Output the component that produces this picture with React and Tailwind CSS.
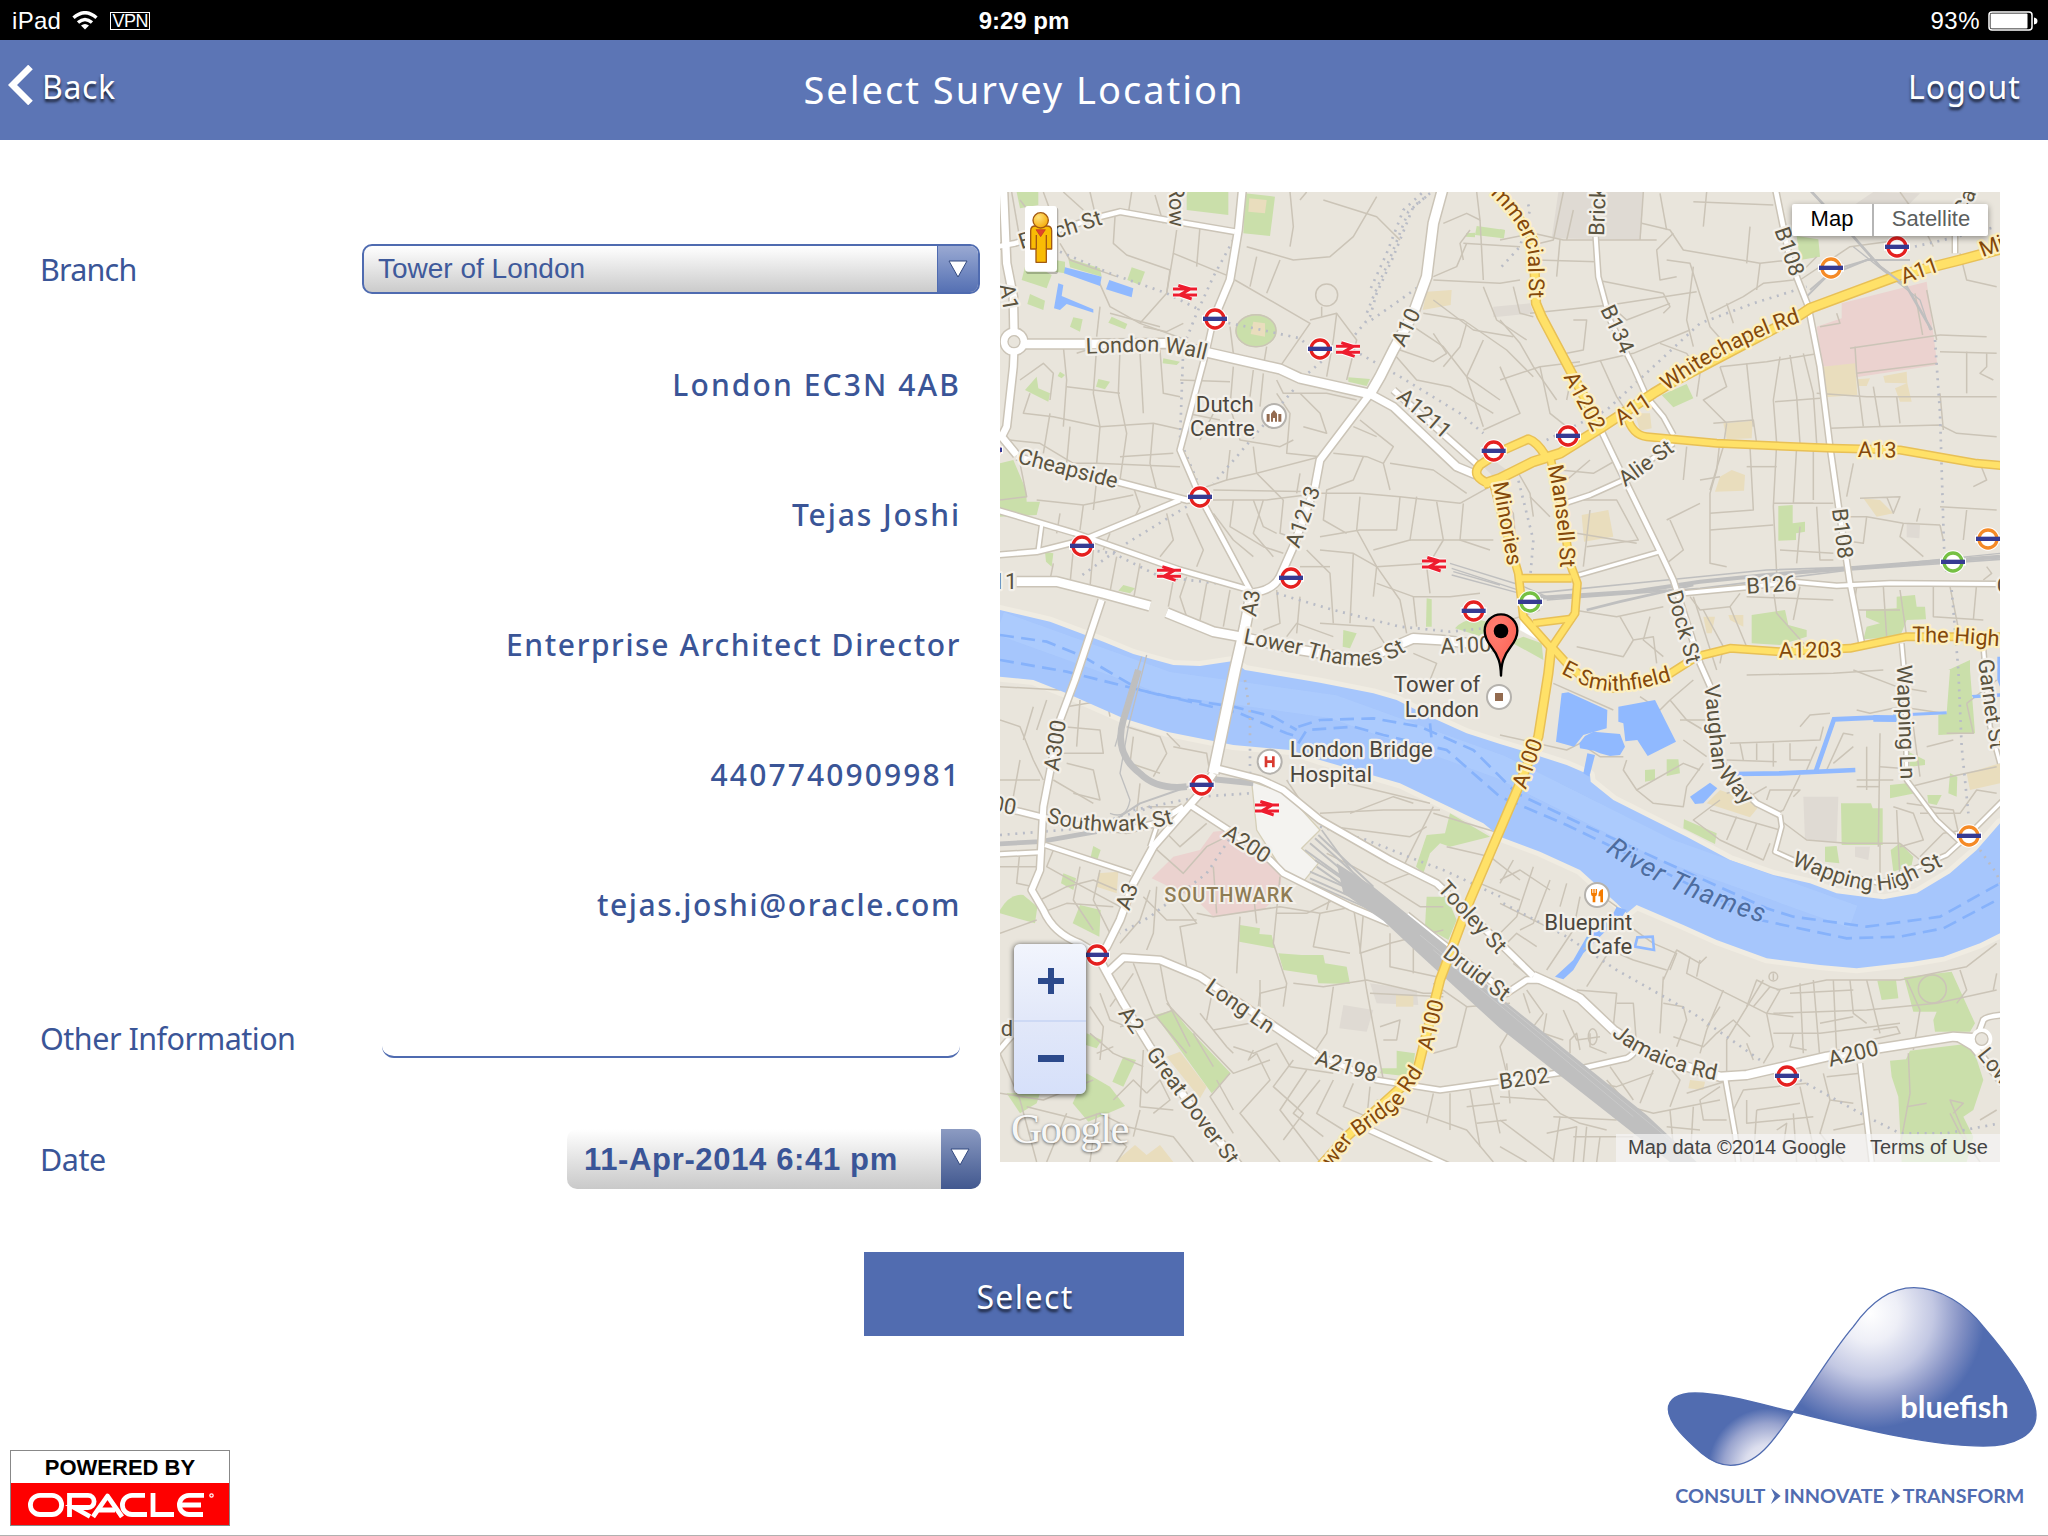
import React from "react";

/* Map drawing units: three per CSS pixel. */

const MINOR = [
  // north-west
  "M35 36L60 180", "M60 60L130 150L240 120", "M130 36L150 90L125 135", "M190 36L250 90", "M270 36L285 100", "M345 110L340 190L380 225L510 270L500 340L420 430",
  "M395 36L385 100", "M465 45L490 130", "M530 150L520 220L690 290", "M520 220L500 340", "M600 140L590 260", "M180 190L210 240L350 290", "M290 290L330 380L420 430L560 480",
  "M300 380L290 470", "M330 400L480 440", "M430 440L500 455L550 430", "M60 600L130 550L160 580L150 660", "M90 640L70 700L160 710L300 740", "M150 700L130 820",
  "M190 500L200 600L190 740", "M230 520L290 500L280 640L300 740L290 850", "M200 620L360 640", "M360 510L355 640L380 760L360 900", "M420 520L430 700", "M480 510L490 640L540 650",
  "M300 740L460 730L550 750", "M460 730L450 850L470 930", "M210 740L200 850", "M540 600L690 605", "M560 700L660 720", "M30 780L120 790L220 850L290 850L540 860",
  "M360 830L520 820", "M60 850L80 950L0 960", "M110 960L250 975L400 945", "M250 975L240 1050", "M290 900L280 990", "M400 920L420 980L400 1020", "M180 1000L170 1060", "M330 1060L310 1110",
  "M160 1150L150 1200", "M220 1110L210 1210", "M280 1110L270 1220", "M350 1130L330 1235", "M420 1150L400 1260", "M480 1180L520 1200L505 1280", "M560 1190L540 1250L560 1310", "M620 1210L600 1320", "M690 1230L670 1340",
  "M500 1000L520 1080L480 1130", "M560 1000L610 1110L590 1160", "M640 1000L700 1080L760 1130", "M700 960L690 1040L790 1100L850 1120", "M760 960L790 1040L830 1060",
  // north-centre
  "M740 200L880 240L990 230L1060 170L1130 50", "M870 36L880 140L870 200", "M970 60L1130 110L1200 180", "M920 36L900 60", "M705 300L930 430L840 560", "M840 240L800 340", "M770 230L750 320", "M930 420L1010 400L1000 480L980 590",
  "M965 380L965 410", "M1010 400L1070 480L1040 600", "M690 440L700 520", "M800 500L790 560", "M830 600L850 640L980 640L1070 660", "M790 580L780 680", "M700 560L690 680L720 780L840 800L880 780", "M760 570L750 650",
  "M640 700L600 780", "M830 640L870 700L860 820L960 830", "M900 640L960 700L980 760L910 740", "M690 810L680 900L620 920L610 960", "M760 800L770 880L850 960", "M680 900L770 880L960 830", "M640 930L960 935", "M620 960L800 960L960 940L1080 940L1200 950L1380 970",
  "M850 960L840 1060L900 1080", "M790 960L760 1060L820 1130", "M900 880L890 940", "M1000 820L1100 830L1150 850L1170 930", "M1090 830L1060 900L980 930L970 1020L1040 1060", "M1170 850L1300 870L1400 940", "M1060 740L1130 770",
  "M1150 850L1180 800L1130 760L1080 720", "M1200 950L1190 1050L1080 1050L960 1070", "M1080 950L1070 1050L1130 1160L1120 1250", "M1250 950L1230 1080L1120 1110", "M1310 965L1330 1080L1300 1130", "M1390 970L1380 1080L1470 1110", "M1470 920L1380 970",
  "M1230 1080L1480 1080", "M960 1110L1060 1120L1130 1160L1290 1150", "M920 1110L990 1180L1000 1330", "M900 1160L990 1160", "M1130 1210L1240 1250L1350 1250L1440 1240", "M1060 1120L1050 1330", "M1130 1160L1200 1260L1220 1360", "M1280 1160L1290 1240", "M1240 1250L1250 1340",
  "M830 1230L840 1330L790 1350", "M900 1250L890 1360", "M960 1330L1120 1340L1160 1400", "M860 1370L890 1330L1000 1370", "M1240 1420L1310 1450L1290 1500",
  "M1300 300L1500 310L1560 300", "M1330 130L1400 100L1440 120L1430 36", "M1440 120L1450 300", "M1400 190L1370 260L1300 290", "M1390 190L1560 200", "M1410 150L1380 190L1390 240", "M1270 400L1390 420L1520 510L1600 590", "M1300 360L1420 450L1540 470",
  "M1240 440L1330 500L1400 590L1450 740", "M1300 460L1340 520L1300 545L1200 510", "M1400 430L1380 500L1330 560", "M1450 480L1400 590L1500 660", "M1180 520L1250 600L1350 620L1480 700", "M1500 560L1560 700L1450 750", "M1450 320L1490 420L1580 480", "M1540 320L1560 400L1600 410",
  // north-east
  "M1500 180L1600 160L1690 180L1970 180", "M1690 36L1660 180L1620 190", "M1930 36L1920 180", "M1925 130L2010 150L2050 210L2280 250L2370 240", "M1610 240L1790 245", "M1680 180L1670 290", "M1720 90L1700 180", "M2080 65L2320 75", "M2120 36L2110 140", "M1980 40L2000 150",
  "M1590 400L1830 375L2090 335", "M1830 375L1880 420L2010 370", "M2080 260L2060 420L2080 500", "M2020 160L1970 210L1980 300L2030 290", "M2000 240L2070 250L2130 440L2200 520", "M1790 300L1990 340L2010 380L1990 400", "M2070 450L1900 520L1720 560L1700 660", "M1720 420L1760 420L1750 510L1700 520",
  "M1500 420L1560 490L1600 560L1670 660", "M1500 600L1620 560L1740 545", "M1620 560L1650 700L1700 740", "M1800 540L1850 650L1870 680", "M1980 490L2060 520L2100 580L2090 650", "M2130 400L2230 350L2290 310L2380 300L2450 230", "M2180 370L2200 430", "M2280 250L2270 330", "M2250 140L2240 250",
  "M2160 560L2300 545L2460 520", "M2160 560L2180 620L2110 660L2180 730", "M2240 550L2260 740", "M2340 530L2320 660L2330 790L2320 980L2330 1180", "M2370 525L2390 650L2400 790", "M2410 520L2440 640L2450 790", "M2325 665L2460 655", "M2140 730L2260 720L2270 790", "M2180 730L2170 800L2130 930",
  "M2450 640L2600 650L2990 650", "M2570 580L2590 740", "M2620 620L2640 740", "M2690 650L2700 730", "M2490 745L2620 740L2820 735L2870 760L2990 770", "M2550 505L2820 465", "M2565 500L2570 580L2810 550", "M2460 440L2520 430L2510 400", "M2745 340L2768 465", "M2780 330L2810 480",
  "M2820 465L2960 470", "M2820 515L2990 520", "M2900 515L2900 640", "M2960 520L2960 560L2940 580L2980 600", "M2820 640L2830 750", "M2700 36L2760 120", "M2880 220L2900 300L2990 320", "M2760 120L2800 200", "M2400 300L2550 200L2700 180",
  "M2060 800L2050 900", "M2160 780L2150 870L2130 940L2130 1150L2180 1160", "M2100 900L2160 890", "M2250 800L2260 990L2130 1000", "M2240 860L2330 860", "M2320 970L2500 970", "M2130 1050L2320 1035", "M2390 800L2380 970L2440 970", "M2440 800L2440 960", "M2000 1020L2100 970", "M2010 1020L2050 1110L2000 1150",
  "M1700 960L1850 960L1915 1080L1760 1100", "M1770 990L1750 1160", "M1680 870L1780 880L1850 840", "M1700 900L1770 840", "M1550 870L1590 940L1600 1010", "M1590 950L1650 1010", "M1500 940L1540 1000L1550 1120", "M1730 1060L1910 1090", "M2340 1110L2500 1120", "M2400 1040L2390 1150", "M2450 980L2460 1140L2500 1140",
  "M2580 955L2700 950L2680 1000L2660 950", "M2550 1010L2600 1010L2710 1030L2820 1035", "M2600 1010L2590 1090L2520 1080", "M2710 1030L2700 1070L2770 1130", "M2760 985L2750 1025", "M2820 980L2990 990", "M2940 850L2960 900L2920 920", "M2560 850L2540 950", "M2820 1035L2830 1080", "M2900 990L2890 1080",
  "M2070 1250L2100 1290L2190 1280", "M2080 1250L2150 1470", "M2110 1290L2170 1400L2160 1450", "M2220 1240L2190 1280L2240 1400", "M2240 1250L2500 1260", "M2320 1230L2330 1300L2420 1400", "M2400 1220L2380 1320", "M2570 1220L2560 1290L2700 1290", "M2650 1220L2660 1370", "M2700 1230L2720 1370",
  "M2800 1220L2800 1310L2950 1320", "M2850 1220L2880 1370", "M2930 1210L2920 1320", "M2960 1160L2975 1180L2950 1200", "M1620 1290L1500 1330L1450 1340", "M1720 1290L1850 1310L1990 1280", "M1860 1310L1900 1380L1870 1430L1730 1400", "M1900 1380L1960 1370L1970 1450", "M1950 1310L1930 1380L1990 1430",
  // Wapping
  "M1500 1665L1700 1710L1740 1690L1800 1730L1870 1730", "M1660 1510L1840 1590", "M1920 1550L1980 1590L2010 1560L2080 1500", "M2010 1560L2060 1620L2110 1650", "M2040 1620L2130 1620", "M2050 1680L2120 1730", "M1880 1740L1870 1770L1910 1830L2050 1750L2100 1770",
  "M1910 1830L1960 1870L2050 1880L2060 1820L2110 1750", "M2240 1485L2500 1480L2650 1470", "M2400 1640L2430 1605L2490 1600", "M2190 1690L2460 1680L2470 1640", "M2180 1740L2330 1745", "M2220 1690L2230 1740", "M2270 1690L2270 1740", "M2320 1690L2320 1760", "M2370 1690L2370 1740L2430 1740", "M2450 1700L2420 1770",
  "M2480 1770L2530 1660L2560 1665", "M2500 1750L2560 1700", "M2570 1590L2610 1600L2700 1580L2830 1600", "M2640 1660L2635 2000", "M2570 1820L2640 1820", "M2640 1760L2700 1765", "M2180 1840L2220 1830L2230 1860L2300 1820", "M2300 1860L2310 1830L2400 1830L2380 1850", "M2400 1785L2350 1890L2330 1900",
  "M2160 1860L2080 1920L2160 1980L2290 2040L2310 1990", "M2130 1890L2340 1950", "M2210 1910L2180 1980", "M2270 1930L2240 2010", "M2340 1920L2420 1980L2540 1990L2700 1990", "M2680 1880L2740 1900L2770 1980L2700 2000", "M2690 1890L2700 2100", "M2640 1990L2640 2080", "M2570 1800L2680 1800", "M2600 1700L2600 1830",
  "M2720 1870L2860 1890L2880 1980", "M2760 1900L2880 1900L2930 1830L2990 1840", "M2730 1820L2850 1790L2990 1760", "M2740 1640L2760 1790", "M2900 1570L2990 1500", "M2900 1570L2920 1660L2840 1660", "M2760 2030L2830 1960L2890 1950", "M2700 1990L2760 2040",
  "M2560 1470L2690 1520L2780 1535", "M2780 1700L2860 1680",
  // south-west
  "M0 1620L60 1640L100 1740L130 1800", "M0 1520L180 1530", "M100 1580L70 1680", "M140 1560L110 1650", "M200 1580L320 1560L330 1610", "M190 1640L300 1650L310 1720L180 1720", "M240 1560L230 1700", "M380 1640L480 1670L500 1720L460 1790", "M400 1670L390 1750L480 1780", "M520 1700L620 1720L630 1780",
  "M200 1750L280 1770L300 1860L220 1840", "M160 1800L280 1870", "M0 1800L120 1800", "M60 1740L40 1850", "M540 1700L500 1660", "M440 1880L550 1880", "M420 1810L410 1900", "M460 2000L550 2080L620 2000L700 1960", "M500 1960L540 2000L620 1930", "M160 2010L140 2060L230 2110L360 2180", "M60 2010L50 2110L100 2120",
  "M0 2060L110 2060", "M120 2160L200 2120L280 2100L350 2130", "M120 2200L200 2170L340 2180", "M240 2060L220 2160L280 2250", "M300 2070L280 2160L330 2260", "M0 2260L110 2220", "M450 2130L420 2220L360 2290", "M430 2150L500 2220L590 2220", "M470 2120L460 2260L440 2310", "M530 2150L590 2230L540 2240L560 2360",
  "M590 2200L640 2210L840 2180L960 2200L1060 2180", "M720 2210L710 2380", "M640 2060L650 2200", "M760 2140L770 2230", "M840 2090L830 2190L820 2290L860 2410L850 2480", "M1000 2160L920 2200L830 2200", "M960 2200L940 2300L1050 2320", "M1060 2180L1100 2430L1150 2700", "M1090 2200L1080 2320L1170 2290L1330 2250",
  "M980 2190L990 2150", "M1170 2260L1170 2360L1310 2390", "M1240 2240L1240 2380", "M880 2410L970 2420L1100 2400L1270 2440L1330 2440", "M780 2400L780 2520", "M860 2420L780 2440L770 2520", "M1000 2420L980 2560L940 2620", "M1110 2440L1330 2450", "M1140 2540L1200 2520L1190 2580L1150 2580",
  "M570 2380L640 2420L620 2520", "M480 2350L500 2460L570 2600", "M400 2350L460 2500L560 2620", "M330 2480L400 2380", "M300 2440L330 2520L380 2540", "M360 2540L440 2520L520 2490", "M270 2480L310 2540L300 2640", "M270 2560L340 2620L430 2660", "M290 2620L340 2600", "M430 2610L420 2780L520 2790", "M500 2470L700 2680L810 2640",
  "M600 2500L680 2600L700 2620", "M640 2550L750 2530", "M690 2680L630 2750L700 2860", "M580 2560L640 2660", "M700 2600L760 2620L830 2590L870 2660L1000 2680", "M760 2610L745 2640L770 2620", "M770 2620L810 2700L720 2800L840 2946", "M880 2640L820 2720L910 2800L850 2880", "M920 2670L840 2790L960 2946", "M960 2700L880 2800L970 2870",
  "M1000 2700L950 2800L1030 2850", "M1060 2710L1030 2780L1100 2810", "M1110 2720L1100 2820", "M700 2790L650 2700", "M1130 2760L1260 2800L1400 2850L1480 2946", "M1200 2730L1180 2790", "M1300 2740L1280 2830", "M1410 2730L1440 2900", "M1470 2720L1500 2860", "M1350 2740L1350 2850", "M1400 2780L1500 2770", "M1430 2830L1520 2820",
  "M0 2620L60 2760L110 2946", "M0 2740L130 2760L280 2700", "M80 2780L240 2820L300 2800L380 2840", "M200 2800L140 2946", "M290 2800L270 2946", "M340 2760L400 2700L440 2740", "M440 2740L480 2700L510 2760L460 2800", "M380 2840L520 2870L580 2946", "M330 2850L380 2900L350 2946", "M420 2790L400 2870",
  "M960 1900L1150 1890L1320 1890", "M1050 1900L1180 1850L1240 1870", "M1000 1940L1230 1970L1280 1940", "M860 1800L900 1860L860 1840", "M900 1770L1000 1800L1290 1870", "M1300 1900L1500 1960", "M980 2020L1060 2060L1150 2110L1260 2180L1330 2180", "M1150 2110L1230 2080", "M1300 1880L1210 2060",
  "M1340 2000L1470 2030L1560 2100", "M1440 2110L1560 2160", "M1300 2410L1400 2480L1530 2470", "M1400 2480L1370 2600L1300 2620",
  // south-east
  "M1500 2100L1560 2070L1650 2130", "M1500 2170L1640 2240", "M1540 2040L1500 2110", "M1600 2060L1550 2210L1500 2260", "M1650 2100L1600 2230L1560 2250", "M1700 2110L1680 2180", "M1740 2150L1720 2250L1640 2370", "M1500 2310L1550 2260L1610 2300", "M1590 2390L1540 2350", "M1780 2130L1850 2180L1870 2230", "M1890 2240L1960 2290L2030 2320L2010 2370",
  "M1760 2420L1830 2310L1900 2340L2000 2370", "M1990 2400L2030 2310L2100 2350L2120 2330", "M2070 2330L2060 2380L2200 2450L2300 2500L2380 2510", "M2100 2340L2090 2390", "M1730 2430L1850 2440L1840 2540", "M1990 2390L1980 2560", "M1850 2470L1900 2470L1910 2600", "M1990 2470L2050 2480L2060 2520L2030 2600",
  "M2170 2430L2120 2550L2100 2620", "M2160 2480L2120 2540", "M2290 2400L2180 2580L2180 2690", "M2240 2480L2270 2400L2310 2420L2260 2480", "M2310 2420L2340 2430L2300 2500L2320 2600L2290 2650", "M2320 2400L2320 2380", "M2330 2430L2480 2400L2700 2400L2900 2360L2990 2290", "M2400 2410L2410 2620", "M2440 2400L2460 2640",
  "M2500 2400L2510 2620", "M2550 2400L2560 2500L2600 2530", "M2600 2400L2640 2560", "M2320 2500L2600 2490L2810 2470L2990 2430", "M2370 2440L2560 2430", "M2460 2530L2560 2510", "M2320 2560L2460 2560L2700 2530", "M2380 2560L2370 2600L2420 2610", "M2620 2550L2690 2540L2700 2560L2610 2580", "M2720 2400L2760 2490L2740 2610",
  "M2250 2570L2200 2520L2150 2560L2110 2600L2020 2570", "M2240 2590L2260 2640", "M2880 2370L2900 2430L2870 2470", "M2990 2380L2980 2430", "M1580 2430L1630 2500L1600 2540", "M1570 2440L1590 2500", "M1640 2500L1630 2560L1690 2580", "M1690 2490L1730 2580L1800 2570", "M1710 2620L1710 2580L1730 2560L1740 2610", "M1770 2560L1770 2600L1820 2620",
  "M1500 2500L1540 2530L1500 2600L1520 2680", "M1600 2720L1680 2800L1740 2830L1820 2850", "M1740 2700L1850 2720L1960 2680", "M1820 2700L1890 2780L1960 2800L2160 2760", "M1960 2670L1920 2770", "M1990 2640L2040 2700L2010 2780", "M1830 2660L1900 2760", "M2160 2720L2100 2760L2110 2820L2180 2820", "M2190 2700L2060 2740",
  "M2200 2790L2230 2730L2420 2710", "M2240 2760L2240 2830L2440 2810", "M2270 2790L2400 2770", "M2270 2790L2260 2946", "M2330 2850L2360 2830L2350 2900", "M2400 2720L2450 2946", "M2470 2680L2490 2760L2560 2770", "M2490 2760L2460 2860L2530 2946", "M2580 2680L2480 2690", "M2500 2850L2600 2830", "M2380 2800L2390 2946",
  "M1500 2750L1640 2760", "M1520 2650L1530 2770", "M1660 2810L1850 2820", "M1640 2860L1730 2840L1720 2946", "M1680 2810L1660 2946", "M1760 2840L1750 2946", "M1720 2870L1900 2870", "M1800 2870L1790 2946", "M1500 2820L1660 2940", "M1500 2900L1580 2946", "M2010 2790L2020 2900", "M2080 2780L2070 2946", "M2000 2840L2100 2850",
  "M2725 2620L2730 2740L2700 2900", "M2860 2800L2890 2770L2850 2760L2900 2880", "M2850 2800L2880 2860L2940 2946", "M2940 2820L2990 2790", "M2720 2780L2780 2770",
];

const PARKS = [
  "M50 36L115 36L115 75L60 85Z", "M560 36L685 36L685 105L560 90Z", "M735 40L825 50L810 168L730 160Z", "M80 240L155 285L140 325L65 300Z", "M165 240L195 245L195 280L165 275Z", "M205 235L300 265L305 290L210 262Z", "M395 262L435 275L420 315L382 300Z", "M90 342L135 362L130 390L82 372Z",
  "M220 412L248 418L240 455L210 440Z", "M335 410L382 432L375 448L325 428Z", "M490 535L540 545L530 555L488 550Z", "M110 590L115 625L150 640L145 665L75 630Z", "M180 575L195 585L185 595L173 588Z", "M295 597L330 605L315 628L288 620Z", "M0 850L40 840L78 930L80 965L120 965L110 1005L0 1010Z", "M1045 592L1110 597L1100 618L1045 605Z",
  "M135 1115L160 1120L155 1160L138 1145Z", "M370 1215L405 1225L390 1240L355 1232Z", "M1280 1255L1295 1258L1295 1340L1278 1340Z", "M1030 1350L1070 1360L1050 1405L1028 1400Z", "M1365 1345Q1400 1305 1460 1325L1500 1350L1460 1375Z", "M1530 1385L1570 1370L1625 1390L1630 1440Z",
  "M1430 138L1515 150L1510 175L1425 165Z", "M1398 160L1425 158L1425 172L1398 170Z", "M1500 148L1515 150L1512 175L1500 175Z",
  "M1985 645L2060 612L2080 655L2020 682Z", "M2390 168L2455 178L2460 230L2400 240Z", "M2335 978L2378 975L2378 1030L2415 1025L2415 1055L2388 1060L2388 1080L2335 1082Z", "M2255 1305L2355 1290L2365 1335L2420 1350L2420 1370L2340 1395L2255 1390Z", "M2690 1250L2745 1245L2750 1280L2775 1280L2778 1318L2720 1320L2700 1370L2590 1378L2600 1340L2640 1330L2598 1312L2598 1290L2690 1285Z",
  "M2850 1470L2910 1470L2925 1660L2815 1665L2815 1605L2840 1600Z", "M2670 1815L2720 1810L2745 1840L2670 1855Z", "M2725 1715L2775 1740L2775 1755L2730 1760Z", "M2850 1780L2872 1790L2870 1850L2845 1840Z", "M2782 1845L2825 1845L2810 1875L2785 1870Z", "M2523 1870L2613 1870L2618 1885L2648 1885L2648 1995L2525 1995Z", "M2700 1990L2740 2030L2735 2055L2680 2075L2672 2010Z",
  "M2475 2000L2510 1998L2518 2050L2475 2045Z", "M2052 1918L2150 1960L2145 1992L2050 1945Z", "M1935 1770L1965 1768L1965 1800L1935 1805Z", "M2000 1738L2035 1738L2040 1780L2000 1788Z",
  "M2632 2402L2688 2400L2695 2455L2645 2460Z", "M2712 2392L2855 2375L2925 2530L2910 2555L2805 2555L2800 2520L2810 2495L2740 2495Z", "M2670 2642L2718 2638L2730 2612L2915 2590L2950 2700L2920 2790L2890 2810L2920 2870L2900 2946L2705 2946L2695 2750L2675 2690Z",
  "M280 1998L302 2010L290 2045L272 2030Z", "M190 2080L228 2095L220 2130L183 2110Z", "M0 2190Q30 2140 70 2145L112 2180L105 2230L0 2200Z", "M240 2175L302 2190L298 2270L218 2230Z", "M465 2505L520 2490L560 2540L692 2680L635 2740Z", "M370 2630L408 2640L370 2720L337 2705Z", "M260 2560L305 2580L290 2605L258 2595Z", "M218 2770L260 2680L330 2720L375 2778L265 2825Z", "M20 2740L120 2740L110 2770L60 2800Z",
  "M720 2235L780 2245L778 2262L815 2265L825 2305L718 2285Z", "M835 2320L905 2325L970 2325L975 2350L1040 2360L1050 2412L955 2410L950 2385L850 2370Z", "M1190 2612L1245 2620L1235 2690L1140 2680L1145 2665L1190 2665Z", "M1350 1900L1470 1970L1350 2000L1320 1990L1290 2020L1270 2080L1248 2060L1280 1965L1335 1960Z", "M1280 2150L1340 2150L1370 2220L1345 2280L1275 2240Z",
  "M2845 1470L2910 1440L2910 1470Z",
];

const SANDS = [
  "M748 55L800 60L795 100L745 95Z", "M760 425L795 430L795 470L752 462Z", "M1280 335L1355 330L1352 375L1268 390Z", "M1905 700L1950 700L1955 745L1920 752Z", "M1745 1005L1825 990L1840 1070L1752 1085Z", "M2170 730L2258 722L2255 775L2180 778Z", "M2160 890L2195 870L2235 885L2232 932L2145 935Z", "M2468 560L2565 550L2572 645L2475 652Z", "M2570 598L2610 595L2600 618L2575 618Z",
  "M2650 588L2720 575L2722 610L2735 665L2700 665L2685 625L2720 610L2655 608Z", "M2590 955L2640 960L2680 1000L2630 1010Z", "M2110 1310L2145 1310L2135 1360L2120 1360Z", "M2185 1305L2230 1305L2230 1340L2190 1320Z", "M2160 1830L2280 1875L2250 1912L2120 1870Z", "M2900 1780L3000 1750L3000 1810L2910 1830Z", "M295 2080L355 2075L350 2140L290 2120Z",
  "M500 2630L540 2615L620 2720L600 2755Z", "M345 2946L405 2895L440 2925L480 2895L520 2946Z", "M2070 2700L2115 2705L2110 2730L2065 2725Z", "M1188 2445L1240 2445L1240 2480L1188 2480Z",
];

const GREYS = [
  "M1675 36L1930 36L1922 180L1655 175Z", "M2620 36L2760 40L2700 100L2540 90Z", "M1110 2410L1250 2430L1255 2475L1130 2470Z", "M1030 2475L1120 2490L1100 2555L1018 2545Z", "M2410 1850L2515 1850L2510 1985L2415 1980Z", "M1480 380L1590 370L1600 400L1480 412Z", "M2345 1020L2375 1018L2375 1078L2345 1078Z", "M2720 1030L2760 1035L2758 1075L2720 1072Z", "M1450 860L1480 840L1520 870L1490 900Z", "M2565 2000L2610 2000L2605 2040L2565 2030Z",
];

const PINK = ["M2525 370L2780 305L2812 555L2568 592L2565 555L2468 560L2450 440L2525 415Z", "M640 1955L690 1950L790 2035L845 2080L840 2140L790 2190L640 2210L590 2160L455 2095L520 2030L600 2010Z"];

const WATER = [
  "M195 262L305 290L300 318L192 280Z", "M328 300L400 325L395 352L318 328Z", "M175 310L190 315L185 348L280 388L280 398L200 372L180 390L162 385Z",
  "M1685 1540L1705 1537L1822 1590L1820 1645L1750 1665L1722 1700L1668 1685Z", "M1738 1690L1755 1668L1780 1655L1860 1662L1875 1700L1860 1725L1830 1728L1800 1720L1782 1712L1740 1705Z", "M1855 1580L1965 1560L2028 1685L1943 1728L1912 1680L1876 1684L1870 1630L1855 1625Z", "M1762 1720L1785 1725L1768 1790L1750 1780Z",
  "M2070 1850L2130 1808L2152 1825L2110 1870L2085 1872Z", "M2915 1545L3000 1540L3000 1550L2920 1555Z", "M1665 2390L1720 2340L1760 2270L1830 2220L1850 2180L1880 2190L1860 2220L1820 2250L1750 2320L1720 2370L1690 2398Z",
  "M2992 1430L3000 1430L3000 1520L2992 1500Z",
];

const RIVER =
  "M0 1290L150 1325L310 1385L400 1422L520 1455L600 1458L700 1443L735 1470L960 1508L1120 1540L1190 1560L1290 1610L1400 1660L1500 1692L1560 1710L1700 1755L1770 1785L1772 1805L1840 1860L1940 1910L2060 1970L2190 2040L2320 2085L2430 2110L2510 2140L2650 2158L2750 2140L2850 2080L2930 2010L3000 1930L3000 2260L2940 2290L2830 2330L2740 2345L2570 2365L2460 2355L2300 2335L2150 2280L2050 2235L1910 2175L1880 2200L1850 2170L1740 2070L1620 2015L1500 1970L1450 1930L1200 1810L960 1740L870 1710L700 1695L500 1655L370 1615L200 1540L100 1500L0 1490Z";

const ROADS = [
  [14, "M-10 200L45 190L300 110L360 95L500 120L705 155"],
  [22, "M10 20L20 250L40 350L42 460"],
  [20, "M42 510L40 560L20 740L5 770L50 825"],
  [16, "M50 830L350 905L560 960L600 955"],
  [20, "M728 20L715 150L690 300L640 420"],
  [14, "M640 420L620 510L540 810L600 950L750 1230"],
  [26, "M65 492L250 492L500 490L620 517L840 567L900 595L1110 642"],
  [22, "M1110 642L1180 680L1370 860L1430 885"],
  [16, "M1180 630L1440 860"],
  [28, "M1330 20L1300 130L1280 290L1240 400L1180 510L1140 590L1110 642"],
  [20, "M1110 642L960 840L945 920L880 1100L840 1190Q820 1230 760 1238"],
  [14, "M-10 990L220 1058L540 1170L750 1230"],
  [14, "M-10 1125L110 1115L250 1080L540 960"],
  [10, "M125 1035L115 1110"],
  [26, "M50 1205L170 1205L310 1240L450 1278"],
  [26, "M500 1298L640 1355L730 1372L900 1410L1090 1440L1240 1375L1320 1380L1500 1400"],
  [18, "M305 1260L225 1500L180 1620L130 1880L120 2070L95 2130L130 2190Q160 2260 240 2290L290 2320"],
  [30, "M755 1240L735 1340L705 1470L640 1780"],
  [20, "M640 1780L600 1840L460 2000L400 2110L360 2220L320 2300L295 2330"],
  [16, "M-10 1880L60 1895L200 1930L380 1950L470 1930L550 1880"],
  [10, "M470 1940L450 2000"],
  [12, "M-10 2023L120 2017"],
  [12, "M135 1995L395 2080"],
  [16, "M570 1875L700 1960L810 2040L850 2080L1050 2180L1170 2230"],
  [18, "M650 1765L780 1798L850 1830L960 1920L1170 2040L1310 2110L1500 2290L1600 2388"],
  [24, "M1600 2388L1660 2415L1740 2455L1840 2550L1960 2630L2160 2690L2240 2685L2480 2630L2860 2570L2930 2575"],
  [16, "M1220 2205L1340 2300L1520 2440L1580 2400L1620 2400"],
  [20, "M320 2380L370 2333L480 2340L600 2390L780 2510L950 2625"],
  [14, "M950 2625L1130 2700L1320 2730L1500 2705L1700 2675L1880 2635Q1900 2625 1905 2610"],
  [20, "M305 2350L370 2470L450 2600L560 2760L720 2960"],
  [16, "M1110 2850L1350 2960"],
  [14, "M-10 2620L50 2550"],
  [12, "M1787 170L1795 290L1830 420L1900 560L1940 650L1990 710L2020 765"],
  [14, "M1805 755L1860 870L1980 1115L2020 1200L2100 1450L2140 1540L2150 1720L2190 1790L2270 1870L2340 1905"],
  [10, "M2340 1905L2345 1940L2325 2015L2380 2040L2510 2080L2640 2110L2840 2025L2900 1970L3010 1860"],
  [12, "M1700 968L1770 945L1870 900L2020 790"],
  [10, "M1720 1190L1980 1115"],
  [14, "M2325 20L2370 240L2425 380L2460 560L2490 800L2520 1010L2550 1210L2585 1390"],
  [12, "M2050 1240L2240 1222L2380 1205L2510 1217L2670 1210L3010 1212"],
  [10, "M2705 1390L2715 1500L2720 1800L2750 1840L2810 1920L2880 1985"],
  [12, "M2865 120L2865 220"],
  [12, "M2175 2690L2205 2860L2215 2946"],
  [12, "M2580 2650L2615 2946"],
  [14, "M2930 2575L2950 2520Q2960 2508 3010 2505"],
  [20, "M2870 2570L2920 2600L3010 2710"],
  [10, "M2950 1400L2970 1640L3000 1750"],
];

const YELLOW = [
  [22, "M1480 20L1540 90L1600 180L1608 370L1625 410L1710 570L1805 750"],
  [24, "M1450 912L1500 895L1600 845L1680 820L1800 745L1960 640L2010 610L2400 405L2430 385L2700 285L2880 240L3010 205"],
  [20, "M1470 912Q1410 890 1440 855L1500 815L1585 777Q1610 785 1635 825"],
  [18, "M1880 705Q1895 765 1940 770L2150 790L2500 805L2700 810L2930 850L3010 857"],
  [18, "M1480 910L1520 1060L1555 1180L1570 1310L1650 1400"],
  [18, "M1650 830L1680 960L1710 1150L1732 1210L1725 1300L1650 1410"],
  [18, "M1560 1195L1715 1195"],
  [16, "M1600 1330L1720 1315"],
  [22, "M1655 1390L1645 1480L1615 1670L1560 1810L1410 2160L1320 2400L1250 2680L1040 2870L960 2960"],
  [18, "M1655 1400L1700 1450L1745 1490L1840 1525L1980 1500L2090 1430L2190 1405L2340 1415L2550 1405L2720 1370L3010 1370"],
];

const RAILS = [
  [4, "M1350 1150L1560 1215L1640 1250L2000 1230"], [4, "M1355 1165L1570 1235L1660 1255"], [4, "M1355 1185L1560 1240"], [4, "M1360 1175L1500 1215"],
  [12, "M1600 1255L1900 1235L2100 1205L2300 1185L2550 1165L2800 1145L3000 1130"], [5, "M1600 1240L2000 1200L2300 1170L2600 1160"], [5, "M1640 1260L2100 1225L2550 1170L3000 1138"], [8, "M1760 1290L1860 1265L2080 1215"], [4, "M2700 1150L3000 1120"],
  [20, "M415 1470L370 1620Q340 1720 420 1780Q470 1830 560 1820"], [4, "M425 1430L345 1700"], [4, "M440 1425L385 1640L360 1780L390 1860Q380 1920 330 1900"],
  [14, "M-10 1992L120 1985L290 1955"], [6, "M290 1955L420 1870L570 1818"], [18, "M640 1798L760 1810"],
  [6, "M930 1990L1180 2200"], [6, "M915 2010L1150 2180"], [6, "M955 1965L1120 2120"], [6, "M945 1975L1140 2150"], [6, "M945 2040L1120 2160"], [6, "M930 2095L1120 2180"], [6, "M950 2060L1180 2220"], [6, "M930 2075L1100 2150"], [5, "M965 1950L1060 2080"], [5, "M935 2110L1160 2210"],
  [6, "M2420 350L2480 290L2600 240L2730 240"], [6, "M2430 330L2500 270L2620 235"], [8, "M2430 30L2560 170L2640 260L2720 320L2795 450"], [4, "M2560 200L2760 360L2790 450"],
];

const YARD = "M1010 2050L1120 2120L1340 2298L1500 2452L1940 2805L2090 2946L2010 2946L1500 2545L1260 2325L1150 2222L1030 2140Z";

const DOTS = [
  "M180 215L330 280L500 340L600 390", "M700 180L640 290L590 400L550 500L540 780L590 900", "M640 420L740 440L900 475L970 540L900 600", "M1290 40L1240 80L1180 230L1130 340L1110 410L1060 470", "M1265 40L1210 90L1160 220L1110 330", "M1278 50L1225 95L1172 230L1122 345L1100 400", "M1060 510L1200 590L1380 700L1450 760", "M880 630L710 830L640 910", "M560 980L380 1090L240 1190",
  "M270 1110L340 1120L480 1190L650 1210", "M830 1240L1000 1290L1200 1340L1350 1355L1500 1340", "M1550 880L1580 1000L1600 1080L1590 1200", "M1640 780L1820 690L1960 560L2100 430L2260 370L2420 320", "M2700 210L2830 180L2990 140", "M2805 480L2820 700L2832 1100L2840 1180", "M2855 1230L2875 1470L2885 1700L2905 1900", "M2940 2010L2990 2080L3000 2110",
  "M735 1500L750 1600L750 1790", "M400 1890L600 1850L750 1840", "M0 1965L250 1945L460 1880", "M700 1960L620 2080L450 2210L360 2260", "M960 1940L1100 1980L1250 2040L1330 2070L1500 2150", "M1510 2170L1700 2270L1850 2370L2080 2500L2280 2640", "M2400 2700L2600 2810L2700 2860L2840 2860L3000 2830", "M1505 260L1560 200L1590 90L1580 60", "M1270 310L1200 360L1100 430",
];

const FERRY = [
  "M0 1365L140 1385L250 1430L420 1530L720 1600L860 1660L895 1670", "M0 1440L200 1475L340 1510L500 1550L700 1580L820 1610L890 1650", "M895 1690L920 1650L1060 1640L1150 1665L1340 1710L1500 1850L1700 1935L1960 2060L2280 2220L2540 2275L2700 2270L2830 2245L3000 2155", "M895 1640L960 1620L1120 1615L1260 1640L1420 1710L1550 1840L1740 1930L1980 2040L2300 2185L2380 2210L2600 2240L2820 2210L3000 2110", "M1290 1630L1295 1680",
];

const INK = "#5a5340";
const BROWN = "#84480a";
const HALO = "#f3f0ea";
const HALO_Y = "#fdf0c0";

const LABELS = [
  ["Row", "M507 14L509 165"], ["Beech St", "M64 208L335 125"], ["A1", "M-2 316L12 395"], ["London Wall", "M258 521L440 514Q540 516 650 549"], ["A10", "M1213 504L1270 385"], ["A1211", "M1187 655L1350 796"],
  ["Cheapside", "M50 848L380 934"], ["11", "M-22 1228L70 1228"], ["A1213", "M897 1107L970 905"], ["A3", "M768 1312L784 1215"], ["Lower Thames St", "M728 1390L905 1425Q1030 1465 1120 1455Q1190 1440 1270 1378"], ["A100", "M1322 1421L1495 1413"],
  ["Brick", "M1812 168L1818 -5"], ["B134", "M1800 388L1874 548"], ["B108", "M2323 150L2378 310"], ["Ca", "M2900 110L2940 10"], ["Alie St", "M1876 922L2045 798"], ["B108", "M2496 988L2517 1160"], ["B126", "M2240 1241L2405 1231"], ["Dock St", "M2000 1238L2068 1480"],
  ["C", "M2990 1238L3050 1238"], ["Wapping Ln", "M2690 1456L2703 1830"], ["Garnet St", "M2934 1440L2958 1620L2985 1790"], ["Vaughan Way", "M2113 1516L2138 1765L2260 1912"], ["Wapping High St", "M2374 2055L2500 2105Q2620 2148 2700 2120L2880 2034"],
  ["A300", "M176 1775L201 1605"], ["200", "M-64 1885L75 1910"], ["Southwark St", "M138 1926Q340 1985 560 1920"], ["A3", "M388 2194L422 2100"], ["A200", "M665 1969L815 2065"], ["Tooley St", "M1310 2128L1515 2350"], ["Druid St", "M1325 2328L1545 2492"],
  ["Long Ln", "M612 2430L825 2576"], ["A2", "M353 2500L410 2580"], ["Great Dover St", "M437 2622Q520 2740 705 2985"], ["A2198", "M942 2652L1160 2718"], ["d", "M2 2568L70 2568"], ["B202", "M1501 2728L1675 2703"], ["Jamaica Rd", "M1834 2565Q1960 2672 2180 2706"], ["A200", "M2490 2660L2665 2618"], ["Low", "M2930 2625L3020 2737"],
];

const YLABELS = [
  ["mmercial St", "M1470 42Q1570 138 1584 220L1588 380"], ["A1202", "M1690 590L1793 785"], ["A11", "M1862 738L1975 665"], ["Whitechapel Rd", "M2001 633Q2200 488 2430 417"], ["A11", "M2711 312L2835 268"], ["Mi", "M2948 232L3025 203"], ["A13", "M2573 831L2705 833"], ["Mansell St", "M1643 860Q1675 990 1682 1190"], ["Minories", "M1478 909L1527 1180"],
  ["A1203", "M2336 1433L2545 1431"], ["The High", "M2736 1386L2860 1388L3050 1402"], ["E Smithfield", "M1682 1480L1745 1512Q1840 1562 2050 1490"], ["A100", "M1577 1830L1638 1660"], ["A100", "M1296 2614L1337 2440"], ["wer Bridge Rd", "M996 2965L1060 2880L1200 2780L1286 2650"],
];

const PLACES = [
  ["Dutch", 761, 697, "end"], ["Centre", 764, 769, "end"], ["Tower of", 1441, 1537, "end"], ["London", 1437, 1610, "end"], ["London Bridge", 869, 1731, "start"], ["Hospital", 869, 1805, "start"], ["Blueprint", 1897, 2249, "end"], ["Cafe", 1897, 2323, "end"],
];

const TUBES = [
  [645, 417, "#e5201f"], [960, 507, "#e5201f"], [600, 951, "#e5201f"], [246, 1098, "#e5201f"], [873, 1194, "#e5201f"], [1421, 1293, "#e5201f"], [1481, 813, "#e5201f"], [1704, 768, "#e5201f"], [2691, 201, "#e5201f"], [605, 1815, "#e5201f"], [291, 2325, "#e5201f"], [2361, 2688, "#e5201f"], [-30, 810, "#e5201f"],
  [2493, 264, "#f58a26"], [2964, 1077, "#f58a26"], [2907, 1968, "#f58a26"], [1590, 1266, "#75c043"], [2859, 1146, "#75c043"],
];

const TRAINS = [[555, 336], [1044, 508], [507, 1180], [1302, 1152], [801, 1884]];

function Tube({ x, y, color }) {
  return (
    <g transform={`translate(${x} ${y})`}>
      <circle r="35" fill="#fff" />
      <rect x="-39" y="-11" width="78" height="22" fill="#fff" />
      <circle r="27" fill="#fff" stroke={color} strokeWidth="10" />
      <rect x="-36" y="-7" width="72" height="13" fill="#363b93" />
    </g>
  );
}

function Train({ x, y }) {
  const d = "M-36 -9H36M-36 9H36M-20 -20L16 -9L-16 9L20 21";
  return (
    <g transform={`translate(${x} ${y})`} fill="none">
      <path d={d} stroke="#fff" strokeWidth="15" />
      <path d={d} stroke="#ee1c2e" strokeWidth="9" />
    </g>
  );
}

function Curved({ id, text, d, color, halo }) {
  return (
    <>
      <path id={id} d={d} fill="none" />
      <text fill={color} stroke={halo} strokeWidth="14" strokeLinejoin="round" paintOrder="stroke" fontSize="65.5">
        <textPath href={`#${id}`}>{text}</textPath>
      </text>
    </>
  );
}

function Poi({ x, y, children }) {
  return (
    <g transform={`translate(${x} ${y})`}>
      <circle r="36" fill="#fff" stroke="#b5b2ad" strokeWidth="6" />
      {children}
    </g>
  );
}

function CityMap() {
  return (
    <svg viewBox="0 36 3000 2910" className="block h-[970px] w-[1000px]" fontFamily="Roboto, sans-serif">
      <defs>
        <radialGradient id="pin" cx="0.35" cy="0.25" r="0.9">
          <stop offset="0" stopColor="#ff8072" />
          <stop offset="1" stopColor="#fb5a4d" />
        </radialGradient>
        <radialGradient id="head" cx="0.35" cy="0.3" r="0.8">
          <stop offset="0" stopColor="#ffe27a" />
          <stop offset="1" stopColor="#f5a800" />
        </radialGradient>
      </defs>
      <rect x="0" y="36" width="3000" height="2910" fill="#e9e5dc" />
      <g fill="#dfdad3">{GREYS.map((d, i) => <path key={i} d={d} />)}</g>
      <g fill="#ebd2cf">{PINK.map((d, i) => <path key={i} d={d} />)}</g>
      <g fill="#cadfaa">
        {PARKS.map((d, i) => <path key={i} d={d} />)}
        <ellipse cx="768" cy="452" rx="62" ry="50" />
      </g>
      <g fill="#e9ddbd">{SANDS.map((d, i) => <path key={i} d={d} />)}</g>
      <path d={RIVER} fill="#f0ece2" stroke="#f0ece2" strokeWidth="30" strokeLinejoin="round" />
      <g fill="none" stroke="#cbc4b7" strokeWidth="4.5" strokeLinejoin="round">
        {MINOR.map((d, i) => <path key={i} d={d} />)}
        <circle cx="980" cy="345" r="33" />
        <circle cx="2320" cy="2390" r="13" />
        <circle cx="2797" cy="2427" r="42" />
        <ellipse cx="1778" cy="2570" rx="13" ry="24" />
        <ellipse cx="768" cy="452" rx="60" ry="48" />
      </g>
      <path d={RIVER} fill="#a6c6fc" />
      <path d="M0 1330L500 1510L1000 1580L1500 1760L2000 2010L2560 2210" fill="none" stroke="#b1cefe" strokeWidth="70" opacity="0.6" />
      <g fill="none" stroke="#86b2fb" strokeWidth="8" strokeDasharray="42 22">{FERRY.map((d, i) => <path key={i} d={d} />)}</g>
      <g fill="#90b9ff">{WATER.map((d, i) => <path key={i} d={d} />)}</g>
      <g fill="none" stroke="#90b9ff">
        <path d="M2200 1782L2340 1780L2566 1770" strokeWidth="14" />
        <path d="M2448 1772L2502 1618L2640 1612" strokeWidth="14" />
        <path d="M2620 1615L2690 1616" strokeWidth="20" />
        <path d="M2680 1606L2840 1598" strokeWidth="9" />
        <path d="M1912 2272L1958 2270L1962 2310L1905 2300Z" strokeWidth="8" />
      </g>
      <path d="M755 1805L860 1840L960 1950L905 2005L955 2050L910 2105L850 2075L770 1950Z" fill="#f4f3f0" stroke="#d5cfb8" strokeWidth="4" />
      <g fill="none" stroke="#b9bcc6" strokeWidth="8" strokeDasharray="6 17">{DOTS.map((d, i) => <path key={i} d={d} />)}</g>
      <g fill="none" stroke="#bfbfbf">{RAILS.map(([w, d], i) => <path key={i} d={d} strokeWidth={w} strokeLinejoin="round" />)}</g>
      <g fill="none" stroke="#cbc4b7" strokeLinejoin="round">
        {ROADS.map(([w, d], i) => <path key={i} d={d} strokeWidth={w + 9} />)}
        <circle cx="42" cy="485" r="29" strokeWidth="30" />
      </g>
      <g fill="none" stroke="#fff" strokeLinejoin="round">
        {ROADS.map(([w, d], i) => <path key={i} d={d} strokeWidth={w} />)}
        <circle cx="42" cy="485" r="29" strokeWidth="21" />
        <circle cx="2945" cy="2577" r="26" strokeWidth="12" />
        <path d="M1562 1320L1625 1385L1560 1350Z" fill="#fff" />
      </g>
      <path d={YARD} fill="#bfbfbf" />
      <path d="M1260 2265L2010 2880M1300 2310L1900 2810" stroke="#cfcfcf" strokeWidth="2" fill="none" />
      <circle cx="42" cy="485" r="18" fill="#e9e5dc" stroke="#cbc4b7" strokeWidth="4" />
      <circle cx="2945" cy="2577" r="19" fill="#e9e5dc" stroke="#cbc4b7" strokeWidth="4" />
      <g fill="none" stroke="#e8c056" strokeLinejoin="round">{YELLOW.map(([w, d], i) => <path key={i} d={d} strokeWidth={w + 9} />)}</g>
      <g fill="none" stroke="#ffe168" strokeLinejoin="round">{YELLOW.map(([w, d], i) => <path key={i} d={d} strokeWidth={w} />)}</g>
      <path d="M2430 30L2560 170L2640 260L2720 320" fill="none" stroke="#bfbfbf" strokeWidth="6" />

      {LABELS.map(([t, d], i) => <Curved key={i} id={`road${i}`} text={t} d={d} color={INK} halo={HALO} />)}
      {YLABELS.map(([t, d], i) => <Curved key={i} id={`main${i}`} text={t} d={d} color={BROWN} halo={HALO_Y} />)}
      <path id="thames" d="M1816 2014Q2000 2145 2350 2248" fill="none" />
      <text fill="#4d6c9e" stroke="#a8c8fd" strokeWidth="10" paintOrder="stroke" fontSize="80" fontStyle="italic" letterSpacing="4.5">
        <textPath href="#thames">River Thames</textPath>
      </text>
      <g fill="#4b463d" stroke={HALO} strokeWidth="14" strokeLinejoin="round" paintOrder="stroke" fontSize="66.5">
        {PLACES.map(([t, x, y, a]) => <text key={t} x={x} y={y} textAnchor={a}>{t}</text>)}
      </g>
      <text x="493" y="2165" fontSize="60" fontWeight="500" fill="#8f7d55" stroke={HALO} strokeWidth="12" paintOrder="stroke" textLength="386">SOUTHWARK</text>

      {TUBES.map(([x, y, c]) => <Tube key={`${x}-${y}`} x={x} y={y} color={c} />)}
      {TRAINS.map(([x, y]) => <Train key={`${x}-${y}`} x={x} y={y} />)}

      <Poi x={822} y={708}><path d="M-22 17V-6H-13V17ZM13 17V-6H22V17ZM-9 17V-7L0 -18L9 -7V17H3V6H-3V17Z" fill="#936b50" /></Poi>
      <Poi x={809} y={1745}><path d="M-15 -16H-7V-4H7V-16H15V17H7V4H-7V17H-15Z" fill="#d93a30" /></Poi>
      <Poi x={1497} y={1551}><rect x="-12" y="-12" width="24" height="24" fill="#936b50" /></Poi>
      <Poi x={1791} y={2145}><path d="M-18 -18V-4Q-18 2 -13 4V22H-5V4Q0 2 0 -4V-18H-4V-6H-7V-18H-11V-6H-14V-18ZM18 -18Q4 -16 4 4H10V22H18Z" fill="#f57c00" /></Poi>

      <path d="M1503 1487C1502 1450 1496 1428 1474 1400C1462 1385 1454 1372 1454 1352A49 49 0 0 1 1552 1352C1552 1372 1544 1385 1532 1400C1510 1428 1504 1450 1503 1487Z" fill="url(#pin)" stroke="#000" strokeWidth="7" strokeLinejoin="round" />
      <circle cx="1503" cy="1353" r="22" fill="#000" />

      <rect x="77" y="82" width="98" height="200" rx="10" fill="#000" opacity="0.22" />
      <rect x="75" y="78" width="96" height="197" rx="9" fill="#fff" />
      <g stroke="#a35a12" strokeWidth="4" strokeLinejoin="round">
        <path d="M92 152Q92 138 106 138H140Q155 138 155 152V207H139V247H108V207H92Z" fill="#f9bc04" />
        <path d="M109 165V207M139 165V207" fill="none" />
        <path d="M108 149H136L122 170Z" fill="#e0442c" stroke="#c03a20" strokeWidth="2" />
        <circle cx="122" cy="121" r="23" fill="url(#head)" />
      </g>
    </svg>
  );
}

function MapPanel() {
  return (
    <div className="relative h-[970px] w-[1000px] overflow-hidden">
      <CityMap />
      <div className="absolute left-[792px] top-3 flex h-8 w-[196px] rounded-xs bg-white font-['Liberation_Sans',sans-serif] text-[22px] leading-[30px] shadow-[0_2px_6px_rgba(0,0,0,0.4)]">
        <div className="w-[82px] border-r-2 border-[#b5b5b5] text-center text-black">Map</div>
        <div className="flex-1 text-center text-[#5c5f60]">Satellite</div>
      </div>
      <div className="absolute left-3.5 top-[752px] flex h-[150px] w-[72px] flex-col rounded-md bg-linear-to-b from-[#f2f5fd] via-[#e2e8f9] to-[#d6e0fa] shadow-[0_1px_5px_1px_rgba(0,0,0,0.55)]">
        <div className="flex h-[78px] items-center justify-center border-b-2 border-[#cdd9f5]">
          <svg viewBox="0 0 26 26" className="-mr-0.5 mb-0.5 h-[26px] w-[26px]"><path d="M0 10H10V0H16V10H26V16H16V26H10V16H0Z" fill="#2c4a8c" /></svg>
        </div>
        <div className="flex flex-1 items-center justify-center">
          <div className="-mr-0.5 h-[7px] w-[26px] bg-[#2c4a8c]" />
        </div>
      </div>
      <div className="absolute left-[11px] top-[909px] font-['Liberation_Serif',serif] text-[43px] leading-[56px] tracking-[-1.6px] text-white/95 [text-shadow:0_1px_3px_rgba(0,0,0,0.6)]">
        Google
      </div>
      <div className="absolute bottom-0 right-0 flex h-7 w-[384px] items-center gap-[24px] bg-[#f5f5f5]/70 pb-0.5 pl-[12px] font-['Liberation_Sans',sans-serif] text-[20px] text-[#444]">
        <span className="w-[218px] whitespace-nowrap">Map data ©2014 Google</span>
        <span className="whitespace-nowrap">Terms of Use</span>
      </div>
    </div>
  );
}

function StatusBar() {
  return (
    <div className="grid h-10 grid-cols-3 items-center bg-black font-['Liberation_Sans',sans-serif] text-[24px] leading-10 text-white">
      <div className="flex items-center pl-3">
        <span className="tracking-[0.3px]">iPad</span>
        <svg viewBox="0 0 26 19" className="ml-[11px] h-[19px] w-[26px]" fill="none" stroke="#fff" strokeWidth="3.4">
          <path d="M1.5 6.8Q13 -3.4 24.5 6.8" />
          <path d="M6 11.6Q13 5.4 20 11.6" />
          <path d="M13 18.6L9 14.4Q13 11.4 17 14.4Z" fill="#fff" stroke="none" />
        </svg>
        <span className="ml-3 h-[18px] w-10 border border-white text-center text-[18px] leading-4 tracking-[-0.5px]">VPN</span>
      </div>
      <div className="pt-px text-center text-[24px] font-bold">9:29 pm</div>
      <div className="flex items-center justify-end pr-2.5 pt-px">
        <span className="tracking-[0.5px]">93%</span>
        <svg viewBox="0 0 50 20" className="ml-2 h-5 w-[50px]">
          <rect x="1" y="1" width="43" height="18" rx="3" fill="none" stroke="#fff" strokeWidth="1.5" />
          <rect x="2.5" y="2.5" width="37" height="15" rx="1" fill="#fff" />
          <path d="M46 6.5Q49.5 7 49.5 10T46 13.5Z" fill="#fff" />
        </svg>
      </div>
    </div>
  );
}

function Header() {
  return (
    <div className="grid h-[100px] grid-cols-[1fr_auto_1fr] items-center bg-[#5c75b5] font-['Noto_Sans',sans-serif] text-white">
      <div className="flex items-center pl-[8px]">
        <svg viewBox="0 0 25 40" className="mb-[10px] h-10 w-[25px]" fill="none" stroke="#fff" strokeWidth="6.5"><path d="M22.5 2L4.5 20L22.5 38" /></svg>
        <span className="mb-[6px] ml-[9px] text-[32px] leading-10 tracking-[0.6px] [text-shadow:0_3px_3px_rgba(0,0,0,0.7)]">Back</span>
      </div>
      <div className="mb-[2px] text-[38px] leading-[48px] tracking-[2px]">Select Survey Location</div>
      <div className="mb-[6px] pr-[27px] text-right text-[32px] leading-10 tracking-[1.1px] [text-shadow:0_3px_3px_rgba(0,0,0,0.7)]">Logout</div>
    </div>
  );
}

function Arrow() {
  return (
    <svg viewBox="0 0 20 18" className="h-[18px] w-5"><path d="M1 1H19L10 17Z" fill="#fff" stroke="#33497f" strokeWidth="1" /></svg>
  );
}

function Value({ className, children }) {
  return <div className={`flex h-[130px] items-center justify-end pb-[2px] pr-[39px] text-[30px] font-medium ${className}`}>{children}</div>;
}

function Form() {
  return (
    <div className="flex w-[1000px] flex-col pt-[104px] font-['Noto_Sans',sans-serif] text-[#3a5597]">
      <div className="flex h-[50px] items-center pl-10">
        <span className="w-[322px] pt-0.5 text-[30.5px] tracking-[-0.8px]">Branch</span>
        <div className="flex h-[50px] w-[618px] overflow-hidden rounded-[10px] border-2 border-[#4f6bb0] bg-linear-to-b from-white to-[#cbcbcb] font-['Liberation_Sans',sans-serif] text-[28px]">
          <div className="flex flex-1 items-center pl-3.5 text-[#3f5a9b]">Tower of London</div>
          <div className="flex w-[41px] items-center justify-center border-l border-[#4f6bb0] bg-linear-to-b from-[#9aa9d2] to-[#5570b3] pr-px"><Arrow /></div>
        </div>
      </div>
      <div className="mt-[26px]">
        <Value className="tracking-[2.1px]">London EC3N 4AB</Value>
        <Value className="tracking-[1.9px]">Tejas Joshi</Value>
        <Value className="tracking-[1.6px]">Enterprise Architect Director</Value>
        <Value className="tracking-[2.1px]">4407740909981</Value>
        <Value className="tracking-[1.6px]">tejas.joshi@oracle.com</Value>
      </div>
      <div className="flex h-[140px] items-center pl-10">
        <span className="w-[342px] pb-[3px] text-[30.5px] tracking-[-0.5px]">Other Information</span>
        <div className="mb-[14px] h-[50px] w-[578px] rounded-[12px] border-b-2 border-[#4f6bb0]" />
      </div>
      <div className="flex h-[102px] items-center pl-10">
        <span className="w-[527px] pb-[2px] text-[30.5px] tracking-[-0.5px]">Date</span>
        <div className="mb-1 flex h-[60px] w-[414px] overflow-hidden rounded-[10px] bg-linear-to-b from-white to-[#c9c9c9] font-['Liberation_Sans',sans-serif] text-[31px] font-bold">
          <div className="flex flex-1 items-center whitespace-nowrap pl-[17px] pt-0.5 tracking-[0.65px] text-[#3a5597]">11-Apr-2014 6:41 pm</div>
          <div className="flex w-10 items-center justify-center bg-linear-to-b from-[#8c9bc2] to-[#42588f] pb-1 pr-[3px]"><Arrow /></div>
        </div>
      </div>
    </div>
  );
}

function OracleBadge() {
  return (
    <div className="flex h-[76px] w-[220px] flex-col border border-[#888] text-center">
      <div className="h-8 bg-white font-['Liberation_Sans',sans-serif] text-[22px] font-bold leading-[33px] text-black">POWERED BY</div>
      <div className="flex-1 bg-[#fe0000]">
        <svg viewBox="0 0 218 42" className="h-[42px] w-[218px]" fill="none" stroke="#fff" strokeWidth="4.8">
          <path d="M29 12.3H41A9.6 9.6 0 0 1 41 31.5H29A9.6 9.6 0 0 1 29 12.3Z" />
          <path d="M58.5 34V12.3H77A6 6 0 0 1 77 24.5H63L79 33.5" />
          <path d="M82 33.8L96.5 13L111 33.8M88 27H104" strokeLinejoin="round" />
          <path d="M134 12.3H121A9.6 9.6 0 0 0 121 31.5H136" />
          <path d="M142 10V31.5H163" />
          <path d="M193 12.3H178A9.6 9.6 0 0 0 178 31.5H192M169 22H190" />
          <circle cx="200.5" cy="12.5" r="1.7" strokeWidth="1.2" />
        </svg>
      </div>
    </div>
  );
}

function BluefishLogo() {
  return (
    <svg viewBox="0 0 1224 828" className="-mb-px h-[276px] w-[408px]">
      <defs>
        <radialGradient id="body" gradientUnits="userSpaceOnUse" cx="690" cy="160" r="345">
          <stop offset="0" stopColor="#fff" />
          <stop offset="0.25" stopColor="#eeeff7" />
          <stop offset="0.55" stopColor="#c3c8e3" />
          <stop offset="0.8" stopColor="#8491c4" />
          <stop offset="1" stopColor="#516cb0" />
        </radialGradient>
        <radialGradient id="tail" gradientUnits="userSpaceOnUse" cx="385" cy="625" r="180">
          <stop offset="0" stopColor="#f6f6fb" />
          <stop offset="0.4" stopColor="#dcdeee" />
          <stop offset="0.75" stopColor="#98a3ce" />
          <stop offset="1" stopColor="#516cb0" />
        </radialGradient>
      </defs>
      <path d="M460 456C520 370 580 270 640 200C700 115 760 83 822 83C900 83 980 135 1030 200C1090 270 1188 390 1188 465C1188 520 1130 558 1030 558C860 558 640 500 460 456Z" fill="url(#body)" stroke="#516cb0" strokeWidth="4" />
      <path d="M460 456C370 435 250 399 165 399C110 399 85 420 85 448C85 490 140 540 185 580C215 605 240 616 272 616C350 616 400 545 460 456Z" fill="url(#tail)" stroke="#516cb0" strokeWidth="4" />
      <text x="781" y="473" fontFamily="Lato, sans-serif" fontWeight="700" fontSize="91" fill="#fff" textLength="325" lengthAdjust="spacingAndGlyphs">bluefish</text>
      <g fontFamily="Lato, sans-serif" fontWeight="700" fontSize="57" fill="#516cb0">
        <text x="106" y="728" textLength="270" lengthAdjust="spacingAndGlyphs">CONSULT</text>
        <text x="431" y="728" textLength="301" lengthAdjust="spacingAndGlyphs">INNOVATE</text>
        <text x="788" y="728" textLength="365" lengthAdjust="spacingAndGlyphs">TRANSFORM</text>
        <path d="M393 685L422 708L393 732L404 708Z" />
        <path d="M752 685L781 708L752 732L763 708Z" />
      </g>
    </svg>
  );
}

export default function App() {
  return (
    <div className="flex h-[1536px] w-[2048px] flex-col overflow-hidden bg-white">
      <StatusBar />
      <Header />
      <div className="flex h-[1072px]">
        <Form />
        <div className="pt-[52px]"><MapPanel /></div>
      </div>
      <div className="grid h-[324px] grid-cols-[1fr_320px_1fr] border-b border-[#b0b0b0]">
        <div className="flex items-end pb-[9px] pl-2.5"><OracleBadge /></div>
        <div className="pt-10">
          <button className="h-[84px] w-[320px] bg-[#516cb0] pl-0.5 pt-1.5 font-['Noto_Sans',sans-serif] text-[32px] tracking-[1.4px] text-white [text-shadow:0_3px_3px_rgba(0,0,0,0.7)]">Select</button>
        </div>
        <div className="flex items-end justify-end"><BluefishLogo /></div>
      </div>
    </div>
  );
}
